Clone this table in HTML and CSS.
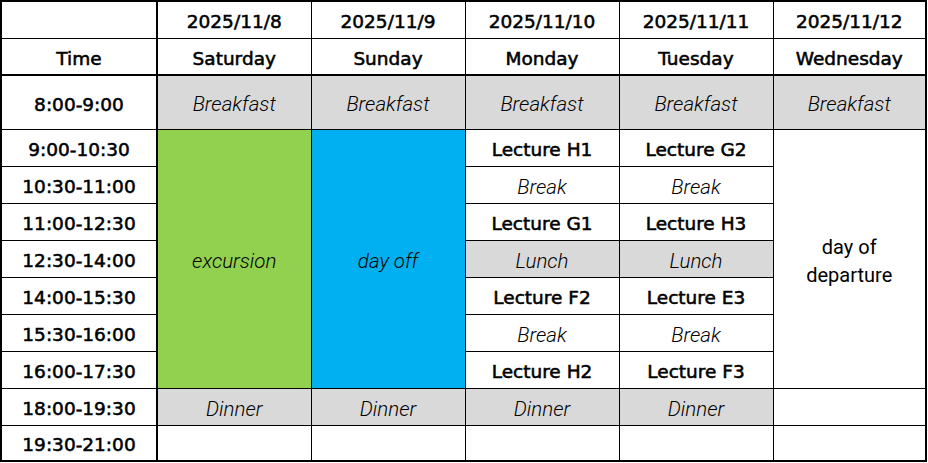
FILE: index.html
```html
<!DOCTYPE html>
<html lang="en">
<head>
<meta charset="utf-8">
<title>Schedule</title>
<link rel="stylesheet" href="styles.css">
</head>
<body>
<table class="schedule">
  <colgroup>
    <col class="c-time"><col class="c-day"><col class="c-day"><col class="c-day"><col class="c-day"><col class="c-last">
  </colgroup>
  <tbody>
    <tr class="r-date">
      <td class="time"></td>
      <td class="head">2025/11/8</td>
      <td class="head">2025/11/9</td>
      <td class="head">2025/11/10</td>
      <td class="head">2025/11/11</td>
      <td class="head">2025/11/12</td>
    </tr>
    <tr class="r-day">
      <td class="time head">Time</td>
      <td class="head">Saturday</td>
      <td class="head">Sunday</td>
      <td class="head">Monday</td>
      <td class="head">Tuesday</td>
      <td class="head">Wednesday</td>
    </tr>
    <tr class="r-tall">
      <td class="time">8:00-9:00</td>
      <td class="meal">Breakfast</td>
      <td class="meal">Breakfast</td>
      <td class="meal">Breakfast</td>
      <td class="meal">Breakfast</td>
      <td class="meal">Breakfast</td>
    </tr>
    <tr>
      <td class="time">9:00-10:30</td>
      <td class="excursion soft" rowspan="7">excursion</td>
      <td class="dayoff soft" rowspan="7">day off</td>
      <td class="lecture">Lecture H1</td>
      <td class="lecture">Lecture G2</td>
      <td class="plain" rowspan="7">day of<br>departure</td>
    </tr>
    <tr>
      <td class="time">10:30-11:00</td>
      <td class="soft">Break</td>
      <td class="soft">Break</td>
    </tr>
    <tr>
      <td class="time">11:00-12:30</td>
      <td class="lecture">Lecture G1</td>
      <td class="lecture">Lecture H3</td>
    </tr>
    <tr>
      <td class="time">12:30-14:00</td>
      <td class="meal">Lunch</td>
      <td class="meal">Lunch</td>
    </tr>
    <tr>
      <td class="time">14:00-15:30</td>
      <td class="lecture">Lecture F2</td>
      <td class="lecture">Lecture E3</td>
    </tr>
    <tr>
      <td class="time">15:30-16:00</td>
      <td class="soft">Break</td>
      <td class="soft">Break</td>
    </tr>
    <tr>
      <td class="time">16:00-17:30</td>
      <td class="lecture">Lecture H2</td>
      <td class="lecture">Lecture F3</td>
    </tr>
    <tr>
      <td class="time">18:00-19:30</td>
      <td class="meal">Dinner</td>
      <td class="meal">Dinner</td>
      <td class="meal">Dinner</td>
      <td class="meal">Dinner</td>
      <td></td>
    </tr>
    <tr class="r-last">
      <td class="time">19:30-21:00</td>
      <td></td>
      <td></td>
      <td></td>
      <td></td>
      <td></td>
    </tr>
  </tbody>
</table>
</body>
</html>
```
FILE: styles.css
```css
html, body {
  margin: 0;
  padding: 0;
  background: #ffffff;
}

.schedule {
  border-collapse: collapse;
  table-layout: fixed;
  width: 927px;
  border: 2px solid #000;
  font-family: "DejaVu Sans", "Noto Sans", sans-serif;
  color: #000;
}

.c-time { width: 156px; }
.c-day { width: 154px; }
.c-last { width: 153px; }

.schedule td {
  border: 1px solid #000;
  padding: 5px 0 0;
  text-align: center;
  vertical-align: middle;
  font-size: 18.5px;
  line-height: 1.4;
  white-space: nowrap;
}

.schedule tr { height: 37px; }
.schedule tr.r-date { height: 37px; }
.schedule tr.r-day { height: 37px; }
.schedule tr.r-day td { border-bottom: 2px solid #000; }
.schedule tr.r-tall { height: 54px; }
.schedule tr.r-last { height: 36px; }

.schedule td.time {
  border-right: 2px solid #000;
}

.schedule td.time,
.schedule td.head,
.schedule td.lecture {
  font-weight: 400;
  -webkit-text-stroke: 0.55px #000;
}

.schedule td.soft,
.schedule td.meal {
  font-family: Roboto, "Open Sans", sans-serif;
  font-style: italic;
  font-weight: 300;
  font-size: 20.5px;
}

.schedule td.meal { background: #d9d9d9; }
.schedule td.excursion { background: #92d050; }
.schedule td.dayoff { background: #00b0f0; }

.schedule td.plain {
  font-family: Roboto, "Open Sans", sans-serif;
  font-weight: 400;
  font-size: 20px;
  line-height: 28px;
}
```
